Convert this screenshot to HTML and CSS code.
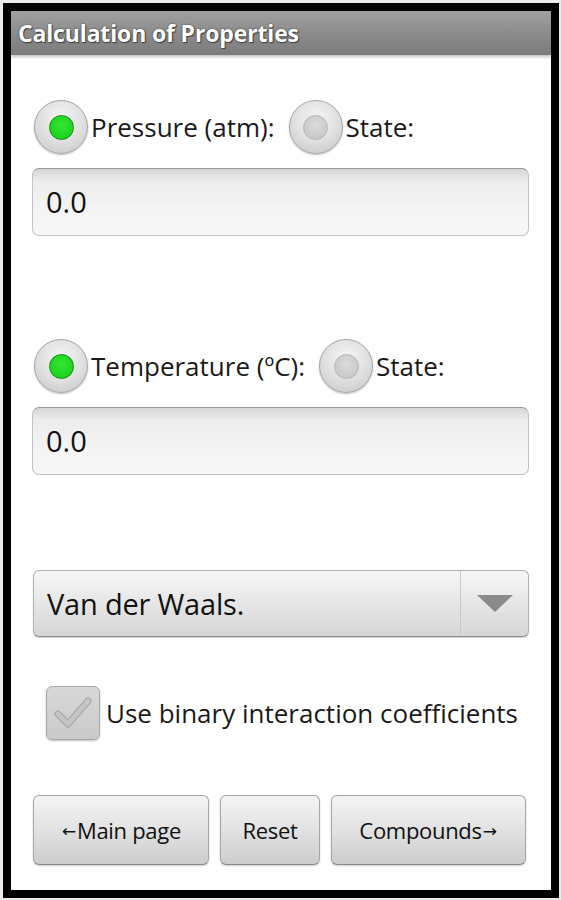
FILE: index.html
```html
<!DOCTYPE html>
<html>
<head>
<meta charset="utf-8">
<link rel="stylesheet" href="styles.css">
</head>
<body>
<div class="frame">
  <div class="titlebar">Calculation of Properties</div>
  <div class="content">
    <div class="radio-row row1">
      <span class="radio on"><span class="dot"></span></span>
      <span class="label">Pressure (atm):</span>
      <span class="radio"><span class="dot"></span></span>
      <span class="label">State:</span>
    </div>
    <div class="field">0.0</div>
    <div class="radio-row row2">
      <span class="radio on"><span class="dot"></span></span>
      <span class="label">Temperature (ºC):</span>
      <span class="radio"><span class="dot"></span></span>
      <span class="label">State:</span>
    </div>
    <div class="field">0.0</div>
    <div class="spinner">
      <span class="spin-text">Van der Waals.</span>
      <span class="spin-arrow"><span class="tri"></span></span>
    </div>
    <div class="check-row">
      <span class="checkbox">
        <svg width="40" height="34" viewBox="0 0 40 34"><path d="M5 18 L15 28 L35 5" fill="none" stroke="#a9a9a9" stroke-width="7" stroke-linecap="round" stroke-linejoin="round"/><path d="M5 18 L15 28 L35 5" fill="none" stroke="#c6c6c6" stroke-width="4.5" stroke-linecap="round" stroke-linejoin="round"/></svg>
      </span>
      <span class="check-label">Use binary interaction coefficients</span>
    </div>
    <div class="buttons">
      <div class="btn b1"><span class="arr">←</span>Main page</div>
      <div class="btn b2">Reset</div>
      <div class="btn b3">Compounds<span class="arr">→</span></div>
    </div>
  </div>
</div>
</body>
</html>
```
FILE: styles.css
```css
html, body {
  margin: 0;
  padding: 0;
}
body {
  width: 561px;
  height: 900px;
  background: #ebebeb;
  font-family: "Open Sans", "Noto Sans", "DejaVu Sans", sans-serif;
  overflow: hidden;
}
.frame {
  margin: 3px 0 0 3px;
  width: 540px;
  height: 879px;
  border: 8px solid #000;
  background: #fff;
  display: flex;
  flex-direction: column;
}
.titlebar {
  height: 44px;
  background: linear-gradient(#a0a0a0, #8c8c8c 50%, #7c7c7c);
  color: #fff;
  font-weight: bold;
  font-size: 23px;
  line-height: 44px;
  padding-left: 7px;
  text-shadow: 0 0 2px #333, 1px 1px 1px #444;
  box-shadow: 0 2px 3px rgba(0,0,0,0.25);
  letter-spacing: -0.15px;
}
.content {
  padding: 0 22px 0 21px;
  display: flex;
  flex-direction: column;
}
.radio-row {
  display: flex;
  align-items: center;
  height: 56px;
  font-size: 26px;
  color: #1a1a1a;
}
.row1 { margin-top: 44px; }
.row2 { margin-top: 102px; }
.radio {
  width: 54px;
  height: 54px;
  border-radius: 50%;
  box-sizing: border-box;
  border: 1px solid #a6a6a6;
  background: radial-gradient(circle at 50% 35%, #f6f6f6, #dedede 55%, #c4c4c4);
  box-shadow: 0 1px 2px rgba(0,0,0,0.25);
  display: flex;
  align-items: center;
  justify-content: center;
  margin-left: 2px;
  flex: none;
}
.radio .dot {
  width: 25px;
  height: 25px;
  border-radius: 50%;
  box-sizing: border-box;
  background: radial-gradient(circle at 50% 40%, #dadada, #c4c4c4);
  border: 1px solid #b6b6b6;
}
.radio.on .dot {
  background: radial-gradient(circle at 50% 40%, #33e633, #14cc14);
  border: 1px solid #0e8e0e;
}
.label {
  margin-left: 3px;
  margin-right: 12px;
}
.field {
  margin-top: 13px;
  height: 68px;
  box-sizing: border-box;
  border: 1px solid #c2c2c2;
  border-top-color: #9a9a9a;
  border-radius: 7px;
  background: linear-gradient(#d6d6d6, #ececec 18%, #f4f4f4 60%, #f7f7f7);
  font-size: 29px;
  color: #111;
  line-height: 66px;
  padding-left: 13px;
}
.spinner {
  margin-top: 95px;
  height: 67px;
  width: 496px;
  margin-left: 1px;
  box-sizing: border-box;
  border: 1px solid #b0b0b0;
  border-bottom-color: #8e8e8e;
  border-radius: 6px;
  background: linear-gradient(#f6f6f6, #e6e6e6 50%, #d6d6d6);
  display: flex;
  align-items: center;
  box-shadow: 0 1px 1px rgba(0,0,0,0.2);
}
.spin-text {
  flex: 1;
  font-size: 29px;
  color: #111;
  padding-left: 13px;
  letter-spacing: -0.2px;
}
.spin-arrow {
  width: 67px;
  height: 100%;
  border-left: 1px solid #c8c8c8;
  display: flex;
  align-items: center;
  justify-content: center;
}
.tri {
  width: 0;
  height: 0;
  border-left: 18px solid transparent;
  border-right: 18px solid transparent;
  border-top: 17px solid #8a8a8a;
}
.check-row {
  margin-top: 48px;
  display: flex;
  align-items: center;
  height: 56px;
  padding-left: 14px;
}
.checkbox {
  width: 54px;
  height: 54px;
  box-sizing: border-box;
  border: 1px solid #a8a8a8;
  border-radius: 6px;
  background: linear-gradient(#d8d8d8, #cacaca);
  box-shadow: 0 1px 2px rgba(0,0,0,0.25);
  display: flex;
  align-items: center;
  justify-content: center;
  flex: none;
}
.check-label {
  margin-left: 6px;
  font-size: 26px;
  color: #1a1a1a;
}
.buttons {
  margin-top: 54px;
  display: flex;
  gap: 11px;
  padding-left: 1px;
}
.btn {
  height: 70px;
  box-sizing: border-box;
  border: 1px solid #a6a6a6;
  border-bottom-color: #8a8a8a;
  border-radius: 6px;
  background: linear-gradient(#f4f4f4, #e2e2e2 50%, #cccccc);
  box-shadow: 0 1px 2px rgba(0,0,0,0.2);
  display: flex;
  align-items: center;
  justify-content: center;
  font-size: 22px;
  color: #111;
  letter-spacing: -0.3px;
}
.arr {
  font-size: 17px;
  margin: 0 1px;
}
.b1 { width: 176px; }
.b2 { width: 100px; }
.b3 { width: 195px; }
```
